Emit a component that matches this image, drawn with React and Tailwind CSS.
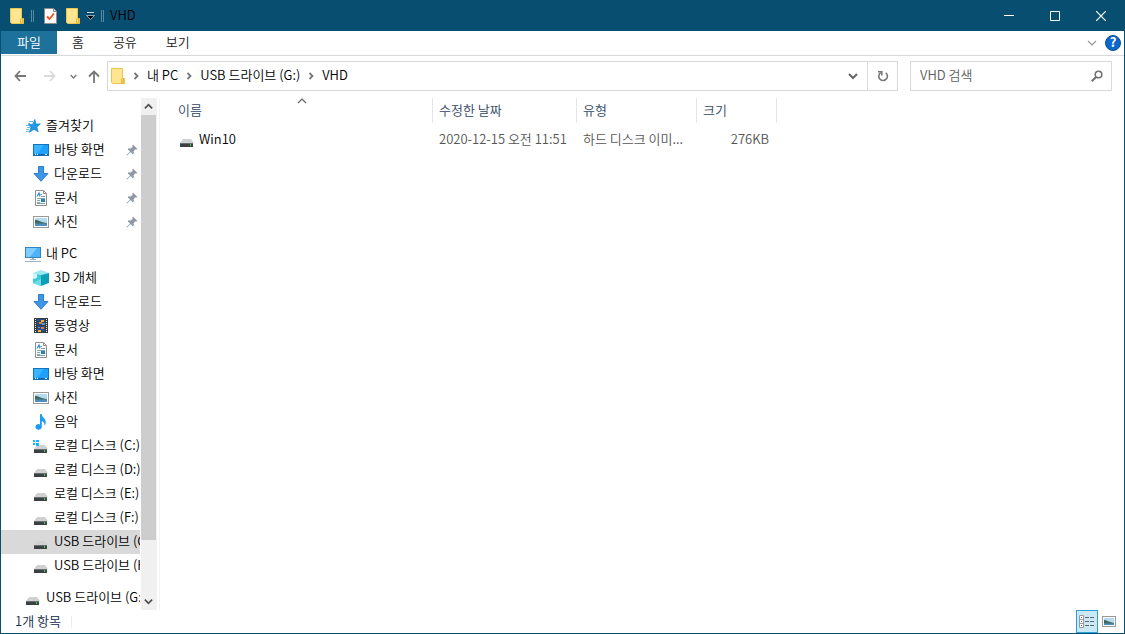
import { useState } from 'react';

function FolderIcon() {
  return (
    <svg width="14" height="16" viewBox="0 0 14 16" aria-hidden="true" className="shrink-0">
      <path d="M0.5 0.5H11.5V10.5H13.5V15.5H2L0.5 14.5Z" fill="#ffe58f" stroke="#eac54f" />
      <path d="M10.5 15V11L11.5 10.5H12.5V15.5H10.5Z" fill="#f9d56a" stroke="#e3b93c" />
    </svg>
  );
}

function CheckDocIcon() {
  return (
    <svg width="13" height="16" viewBox="0 0 13 16" aria-hidden="true" className="shrink-0">
      <path d="M0.5 0.5H9.5L12.5 3.5V15.5H0.5Z" fill="#fafafa" stroke="#8c8c8c" />
      <path d="M9.5 0.5V3.5H12.5" fill="#e0e0e0" stroke="#8c8c8c" />
      <path d="M3 8.5L5.5 11L10 5.5" fill="none" stroke="#e8531d" strokeWidth="1.8" />
    </svg>
  );
}

function StarIcon() {
  return (
    <svg width="16" height="16" viewBox="0 0 16 16" aria-hidden="true">
      <path d="M9.8 1.5L10.9 6H15.3L11.8 9L13.2 13.8L9 11.2L4.5 14.3L5.9 9.3L3.5 6.4H7.8Z" fill="#1e9be8" stroke="#1a86cf" strokeWidth="0.8" />
      <path d="M4 3.5H8M3 5.5H5M1 7.500H4M2 9.500H5M1 11.500H4M1 13.500H4" stroke="#67bdf0" />
    </svg>
  );
}

function DesktopIcon() {
  return (
    <svg width="16" height="16" viewBox="0 0 16 16" aria-hidden="true">
      <rect x="0.5" y="2.5" width="15" height="11" fill="#1ea1fb" stroke="#0f73c0" />
      <path d="M1 12V3H11L4 12Z" fill="#3cb4ff" />
      <path d="M1 12.5H15" stroke="#0b67b2" />
      <path d="M2 12.5H3M4 12.5H5M12 12.5H14" stroke="#e6f5ff" />
    </svg>
  );
}

function DownloadIcon() {
  return (
    <svg width="16" height="16" viewBox="0 0 16 16" aria-hidden="true">
      <path d="M5.5 0.5H10.5V7.5H15L8 15.2L1 7.5H5.5Z" fill="#3d97e6" stroke="#2a7ccc" />
    </svg>
  );
}

function DocumentIcon() {
  return (
    <svg width="16" height="16" viewBox="0 0 16 16" aria-hidden="true">
      <path d="M2.5 0.5H10.5L13.5 3.5V15.5H2.5Z" fill="#fff" stroke="#8f8f8f" />
      <path d="M10.5 0.5V3.5H13.5" fill="none" stroke="#8f8f8f" />
      <path d="M4 6.5L6 3L7 6.5" fill="none" stroke="#2f8fd0" strokeWidth="1.2" />
      <path d="M7 4.5H9M8 6.5H12M4 8.5H12M4 10.5H7M4 12.500H7M4 13.500H12" stroke="#7aa6c2" />
      <rect x="8" y="9" width="4" height="3" fill="#2e7eae" />
    </svg>
  );
}

function PictureIcon() {
  return (
    <svg width="16" height="16" viewBox="0 0 16 16" aria-hidden="true">
      <rect x="0.5" y="2.5" width="15" height="11" fill="#fff" stroke="#999" />
      <rect x="2" y="4" width="12" height="8" fill="#b5dbf2" />
      <path d="M2 6C5 5.500 7 8 14 9V10H2Z" fill="#3f6a62" />
      <path d="M2 9.500H14V12H2Z" fill="#4d8fc0" />
    </svg>
  );
}

function ComputerIcon() {
  return (
    <svg width="16" height="16" viewBox="0 0 16 16" aria-hidden="true">
      <rect x="0.5" y="1.500" width="15" height="10" fill="#4db5f7" stroke="#3383bd" />
      <path d="M1 11V2H12L5 11Z" fill="#7fceff" />
      <path d="M5 13.500H11M7 12.500H9" stroke="#9db2c0" />
      <path d="M0 15.500H16" stroke="#9fb1bf" />
    </svg>
  );
}

function CubeIcon() {
  return (
    <svg width="16" height="16" viewBox="0 0 16 16" aria-hidden="true">
      <path d="M0 3L8 0L16 3L8 5Z" fill="#9be9f2" />
      <path d="M0 3L8 5V16L0 13Z" fill="#3ccadb" />
      <path d="M8 5L16 3V13L8 16Z" fill="#0ba0b8" />
      <path d="M0 3L4 4V8L0 9Z" fill="#d4f6f8" />
      <path d="M0 13L8 9V16Z" fill="#6edce6" />
    </svg>
  );
}

function VideoIcon() {
  return (
    <svg width="16" height="16" viewBox="0 0 16 16" aria-hidden="true">
      <rect x="1" y="0" width="14" height="15" fill="#3a3a3a" />
      <path d="M2.500 1V15M13.500 1V15" stroke="#e8e8e8" strokeDasharray="1 1" />
      <rect x="4" y="1" width="8" height="6" fill="#274b8f" />
      <rect x="4" y="8" width="8" height="6" fill="#274b8f" />
      <path d="M8 2H11V4H8ZM5 12H8V14H5Z" fill="#f0b429" />
      <path d="M6 4H9V6H6ZM8 9H11V11H8Z" fill="#d9822b" />
      <path d="M9 5H12V7H9ZM5 9H7V10H5Z" fill="#4c9be0" />
    </svg>
  );
}

function MusicIcon() {
  return (
    <svg width="16" height="16" viewBox="0 0 16 16" aria-hidden="true">
      <path d="M7 0H8.500C9 3.500 13 4.500 12.800 8.500C12.700 10 12 11 11.300 11.500C11.800 9 10.500 7.500 8.800 7V12.800A3.200 2.800 0 1 1 7 10.400Z" fill="#1c9bf0" />
    </svg>
  );
}

function DriveIcon({ system }) {
  return (
    <svg width="16" height="16" viewBox="0 0 16 16" aria-hidden="true">
      <path d="M4 7H12L15 11H1Z" fill="#cfd1d3" />
      <rect x="1" y="11" width="13" height="4" fill="#3c4043" />
      <path d="M1 11.500H14" stroke="#6b6e70" />
      <rect x="11" y="12" width="1" height="2" fill="#3be04a" />
      {system && <path d="M0 2H2V4H0ZM3 2H6V4H3ZM0 5H2V7H0ZM3 5H6V8H3Z" fill="#16b4f2" />}
    </svg>
  );
}

function PinIcon() {
  return (
    <svg width="12" height="12" viewBox="0 0 12 12" aria-hidden="true" className="shrink-0">
      <path d="M7 0.500L11.500 5L10.300 5.600L9.500 5.300L7.600 7.200L7.800 9.500L6.800 10.300L4.500 8L1 11.500L0.500 11L4 7.500L1.700 5.200L2.500 4.200L4.800 4.400L6.700 2.500L6.400 1.700Z" fill="#8c99a5" />
    </svg>
  );
}

function Chevron({ d, size = 10, color = '#666', width = 1.5 }) {
  return (
    <svg width={size} height={size} viewBox="0 0 10 10" aria-hidden="true" className="shrink-0">
      <path d={d} fill="none" stroke={color} strokeWidth={width} />
    </svg>
  );
}

const DOWN = 'M1 3L5 7L9 3';
const UP = 'M1 7L5 3L9 7';
const RIGHT = 'M3.500 2L6.500 5L3.500 8';

const groups = [
  {
    root: { id: 'fav', label: '즐겨찾기', Icon: StarIcon },
    items: [
      { id: 'fav-desktop', label: '바탕 화면', Icon: DesktopIcon, pinned: true },
      { id: 'fav-down', label: '다운로드', Icon: DownloadIcon, pinned: true },
      { id: 'fav-docs', label: '문서', Icon: DocumentIcon, pinned: true },
      { id: 'fav-pics', label: '사진', Icon: PictureIcon, pinned: true },
    ],
  },
  {
    root: { id: 'pc', label: '내 PC', Icon: ComputerIcon },
    items: [
      { id: '3d', label: '3D 개체', Icon: CubeIcon },
      { id: 'down', label: '다운로드', Icon: DownloadIcon },
      { id: 'video', label: '동영상', Icon: VideoIcon },
      { id: 'docs', label: '문서', Icon: DocumentIcon },
      { id: 'desktop', label: '바탕 화면', Icon: DesktopIcon },
      { id: 'pics', label: '사진', Icon: PictureIcon },
      { id: 'music', label: '음악', Icon: MusicIcon },
      { id: 'c', label: '로컬 디스크 (C:)', Icon: DriveIcon, system: true },
      { id: 'd', label: '로컬 디스크 (D:)', Icon: DriveIcon },
      { id: 'e', label: '로컬 디스크 (E:)', Icon: DriveIcon },
      { id: 'f', label: '로컬 디스크 (F:)', Icon: DriveIcon },
      { id: 'g', label: 'USB 드라이브 (G:)', Icon: DriveIcon },
      { id: 'h', label: 'USB 드라이브 (H:)', Icon: DriveIcon },
    ],
  },
  {
    root: { id: 'usb', label: 'USB 드라이브 (G:)', Icon: DriveIcon },
    items: [],
  },
];

const files = [
  { name: 'Win10', date: '2020-12-15 오전 11:51', type: '하드 디스크 이미...', size: '276KB' },
];

function TreeRow({ item, nested, selected, onSelect }) {
  const { Icon } = item;
  return (
    <button
      type="button"
      onClick={() => onSelect(item.id)}
      className={`flex h-6 w-full items-center gap-[5px] overflow-hidden pr-[2px] whitespace-nowrap ${nested ? 'pl-8' : 'pl-6'} ${selected ? 'bg-[#d9d9d9]' : 'hover:bg-[#e5f3ff]'}`}
    >
      <span className="shrink-0"><Icon system={item.system} /></span>
      <span className="shrink-0 pb-[2px]">{item.label}</span>
      {item.pinned && <span className="ml-auto"><PinIcon /></span>}
    </button>
  );
}

function TitleBar() {
  return (
    <header className="flex h-[30px] shrink-0 items-center bg-[#084e70]">
      <div className="flex items-center pl-[9px]">
        <FolderIcon />
        <span className="ml-[7px] h-3 w-[3px] border-x border-[#5b87a0]" />
        <button type="button" aria-label="속성" className="ml-[10px]"><CheckDocIcon /></button>
        <button type="button" aria-label="새 폴더" className="ml-[9px]"><FolderIcon /></button>
        <button type="button" aria-label="빠른 실행 도구 모음 사용자 지정" className="ml-[6px]">
          <svg width="9" height="8" viewBox="0 0 9 8" aria-hidden="true">
            <path d="M1 0.500H8" stroke="#c9d8e0" />
            <path d="M0.500 3.500H8.500L4.500 7.500Z" fill="#000" stroke="#c9d8e0" strokeWidth="0.7" />
          </svg>
        </button>
        <span className="ml-[6px] h-3 w-[3px] border-x border-[#5b87a0]" />
      </div>
      <h1 className="ml-[6px] flex-1 pb-[2px] text-black">VHD</h1>
      <div className="flex h-full">
        <button type="button" aria-label="최소화" className="flex w-[46px] items-center justify-center hover:bg-white/10">
          <svg width="10" height="10" viewBox="0 0 10 10"><path d="M0 4.500H10" stroke="#fff" /></svg>
        </button>
        <button type="button" aria-label="최대화" className="flex w-[46px] items-center justify-center hover:bg-white/10">
          <svg width="10" height="10" viewBox="0 0 10 10"><path d="M0.500 0.500H9.500V9.500H0.500Z" fill="none" stroke="#fff" /></svg>
        </button>
        <button type="button" aria-label="닫기" className="flex w-[46px] items-center justify-center hover:bg-red-600">
          <svg width="10" height="10" viewBox="0 0 10 10"><path d="M0 0L10 10M10 0L0 10" stroke="#fff" strokeWidth="1.2" /></svg>
        </button>
      </div>
    </header>
  );
}

function RibbonTabs() {
  return (
    <nav className="flex h-[25px] shrink-0 items-start gap-px border-b border-[#d9dadb]">
      <button type="button" className="h-[23px] bg-[#1d719b] px-4 pb-[2px] text-white">파일</button>
      {['홈', '공유', '보기'].map((tab) => (
        <button key={tab} type="button" className="h-[23px] px-[14px] pb-[2px] text-[#1a1a1a]">{tab}</button>
      ))}
      <div className="ml-auto flex h-6 items-center gap-2 pr-[3px]">
        <button type="button" aria-label="리본 확장"><Chevron d={DOWN} color="#999" width={1.2} /></button>
        <button type="button" aria-label="도움말" className="flex h-4 w-4 items-center justify-center rounded-full border border-[#0b4f96] bg-[#0a68cc] pb-[2px] font-bold text-white">
          ?
        </button>
      </div>
    </nav>
  );
}

function AddressBar({ query, setQuery }) {
  return (
    <div className="flex h-[42px] shrink-0 items-start pt-[5px] pr-3">
      <div className="flex h-[30px] items-center pl-[13px]">
        <button type="button" aria-label="뒤로">
          <svg width="12" height="12" viewBox="0 0 12 12"><path d="M6 1L1.500 6L6 11M1.500 6H12" fill="none" stroke="#777" strokeWidth="1.8" /></svg>
        </button>
        <button type="button" aria-label="앞으로" className="ml-[18px]">
          <svg width="12" height="12" viewBox="0 0 12 12"><path d="M6 1L10.500 6L6 11M10.500 6H0" fill="none" stroke="#dadada" strokeWidth="1.800" /></svg>
        </button>
        <button type="button" aria-label="최근 위치" className="ml-[14px]"><Chevron d={DOWN} size={7} color="#777" width={2} /></button>
        <button type="button" aria-label="위로" className="ml-[11px]">
          <svg width="12" height="13" viewBox="0 0 12 13"><path d="M1 6.500L6 1.500L11 6.500M6 1.500V13" fill="none" stroke="#777" strokeWidth="1.800" /></svg>
        </button>
      </div>
      <div className="ml-[7px] flex h-[30px] min-w-0 flex-1 border border-[#d9d9d9]">
        <div className="flex min-w-0 flex-1 items-center pl-[3px] whitespace-nowrap">
          <FolderIcon />
          {['내 PC', 'USB 드라이브 (G:)', 'VHD'].map((part) => (
            <span key={part} className="flex items-center">
              <span className="mx-[6px]"><Chevron d={RIGHT} color="#777" width={1.8} /></span>
              <button type="button" className="pb-[2px]">{part}</button>
            </span>
          ))}
        </div>
        <button type="button" aria-label="이전 위치" className="flex w-[29px] items-center justify-center"><Chevron d={DOWN} width={2} /></button>
        <button type="button" aria-label="새로 고침" className="flex w-[30px] items-center justify-center border-l border-[#d9d9d9]">
          <svg width="12" height="12" viewBox="0 0 12 12">
            <path d="M8.800 2.800A4.300 4.300 0 1 1 3.700 2.600" fill="none" stroke="#777" strokeWidth="1.600" />
            <path d="M1 1.800H4.800V5.500" fill="none" stroke="#777" strokeWidth="1.600" />
          </svg>
        </button>
      </div>
      <label className="ml-3 flex h-[30px] w-[202px] shrink-0 items-center border border-[#d9d9d9] pr-2 pl-[9px]">
        <input
          type="text"
          aria-label="VHD 검색"
          placeholder="VHD 검색"
          value={query}
          onChange={(e) => setQuery(e.target.value)}
          className="min-w-0 flex-1 pb-[2px] outline-none placeholder:text-[#606060]"
        />
        <svg width="12" height="12" viewBox="0 0 12 12" aria-hidden="true">
          <circle cx="7.500" cy="4.500" r="3.300" fill="none" stroke="#707070" strokeWidth="1.600" />
          <path d="M5 7L0.800 11.200" stroke="#707070" strokeWidth="2" />
        </svg>
      </label>
    </div>
  );
}

function Sidebar({ selected, onSelect }) {
  return (
    <aside className="flex w-[159px] shrink-0 border-r border-[#f3f3f3]">
      <div className="flex min-w-0 flex-1 flex-col gap-2 overflow-hidden pt-4">
        {groups.map((group) => (
          <div key={group.root.id}>
            <TreeRow item={group.root} selected={selected === group.root.id} onSelect={onSelect} />
            {group.items.map((item) => (
              <TreeRow key={item.id} item={item} nested selected={selected === item.id} onSelect={onSelect} />
            ))}
          </div>
        ))}
      </div>
      <div className="mr-[2px] ml-px flex w-4 shrink-0 flex-col bg-[#f0f0f0] pr-px">
        <button type="button" aria-label="위로 스크롤" className="flex h-[17px] items-center justify-center"><Chevron d={UP} size={9} color="#505050" width={2} /></button>
        <div className="flex-1">
          <div className="h-[89%] bg-[#cdcdcd]" />
        </div>
        <button type="button" aria-label="아래로 스크롤" className="flex h-[17px] items-center justify-center"><Chevron d={DOWN} size={9} color="#505050" width={2} /></button>
      </div>
    </aside>
  );
}

function FileTable({ query }) {
  const visible = files.filter((f) => f.name.toLowerCase().includes(query.toLowerCase()));
  return (
    <main className="min-w-0 flex-1 overflow-auto pl-3">
      <table className="w-[605px] table-fixed border-separate border-spacing-0">
        <colgroup>
          <col className="w-[261px]" />
          <col className="w-36" />
          <col className="w-[120px]" />
          <col className="w-20" />
        </colgroup>
        <thead>
          <tr className="text-left text-[#2f4663]">
            <th className="relative h-[25px] border-r border-[#e5e5e5] pt-0 pb-[2px] pl-[6px] font-[350]">
              이름
              <span className="absolute top-0 left-1/2 -translate-x-1/2"><Chevron d="M1 5L5 1L9 5" color="#666" width={1.2} /></span>
            </th>
            <th className="border-r border-[#e5e5e5] pt-0 pb-[2px] pl-[6px] font-[350]">수정한 날짜</th>
            <th className="border-r border-[#e5e5e5] pt-0 pb-[2px] pl-[6px] font-[350]">유형</th>
            <th className="border-r border-[#e5e5e5] pt-0 pb-[2px] pl-[6px] font-[350]">크기</th>
          </tr>
        </thead>
        <tbody>
          {visible.map((file) => (
            <tr key={file.name} className="text-[#555]">
              <td className="h-[34px] py-0 pl-[7px] text-black">
                <span className="flex items-center gap-1">
                  <DriveIcon />
                  <span className="pb-[2px]">{file.name}</span>
                </span>
              </td>
              <td className="pt-0 pb-[2px] pl-[6px] whitespace-nowrap">{file.date}</td>
              <td className="pt-0 pb-[2px] pl-[6px] whitespace-nowrap">{file.type}</td>
              <td className="pt-0 pr-2 pb-[2px] text-right">{file.size}</td>
            </tr>
          ))}
        </tbody>
      </table>
    </main>
  );
}

function StatusBar() {
  return (
    <footer className="flex h-[23px] shrink-0 items-center pr-2 pl-[14px] text-[#142c4c]">
      <span className="pb-[2px]">1개 항목</span>
      <span className="ml-[10px] h-3 border-r border-[#ededed]" />
      <div className="ml-auto flex h-full items-center gap-1">
        <button type="button" aria-label="자세히" className="flex h-full w-[22px] items-center justify-center border border-[#26a0da] bg-[#cbe8f6]">
          <svg width="16" height="13" viewBox="0 0 16 13">
            <path d="M0.500 0.500H4.500V12.500H0.500ZM0.500 4.500H4.500M0.500 8.500H4.500" fill="#fff" stroke="#9a9a9a" />
            <path d="M2 2.500H3M2 6.500H3M2 10.500H3M6 2.500H10M11 2.500H15M6 6.500H10M11 6.500H15M6 10.500H10M11 10.500H15" stroke="#666" />
          </svg>
        </button>
        <button type="button" aria-label="큰 아이콘">
          <svg width="14" height="11" viewBox="0 0 14 11">
            <rect x="0.500" y="0.500" width="13" height="10" fill="#fff" stroke="#999" />
            <rect x="2" y="2" width="10" height="7" fill="#b5dbf2" />
            <path d="M2 4C5 4 6 6 12 7V8H2Z" fill="#3f6a62" />
            <path d="M2 7.500H12V9H2Z" fill="#4d8fc0" />
          </svg>
        </button>
      </div>
    </footer>
  );
}

export default function App() {
  const [selected, setSelected] = useState('g');
  const [query, setQuery] = useState('');

  return (
    <div className="flex h-screen flex-col overflow-hidden border border-[#084e70] bg-white font-['Noto_Sans_CJK_KR',sans-serif] text-[13px] leading-4 font-[350] text-black">
      <TitleBar />
      <RibbonTabs />
      <AddressBar query={query} setQuery={setQuery} />
      <div className="flex min-h-0 flex-1">
        <Sidebar selected={selected} onSelect={setSelected} />
        <FileTable query={query} />
      </div>
      <StatusBar />
    </div>
  );
}
